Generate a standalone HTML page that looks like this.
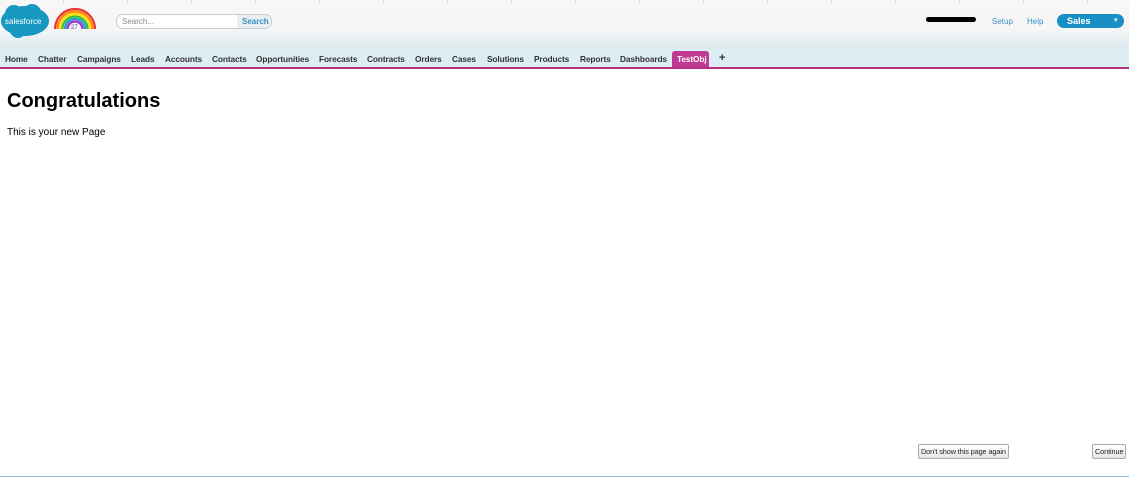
<!DOCTYPE html>
<html><head><style>
body{margin:0;width:1129px;height:481px;position:relative;overflow:hidden;background:#fff;font-family:"Liberation Sans",Arial,sans-serif}
.hdr{position:absolute;left:0;top:0;width:1129px;height:49px;background:linear-gradient(#f7f7f7 0,#f5f6f6 60%,#dbe9ee 100%)}
.tick{position:absolute;top:0;width:1px;height:4px;background:#ddd}
.nav{position:absolute;left:0;top:49px;width:1129px;height:18px;background:#dcedf3;border-bottom:2px solid #b5317f}
.t{position:absolute;top:54px;font-size:8.3px;font-weight:bold;color:#333;letter-spacing:-0.1px}
.a{position:absolute;font-size:8px;font-weight:bold;color:#3a8fc4}
.btn{position:absolute;font-size:7.3px;color:#222;border:1px solid #aaa;border-radius:2px;background:linear-gradient(#fff,#e6e6e6);padding:2px 2px;letter-spacing:-0.1px}
</style></head><body>
<div class="hdr"></div>
<div class="tick" style="left:63px"></div><div class="tick" style="left:127px"></div><div class="tick" style="left:191px"></div><div class="tick" style="left:255px"></div><div class="tick" style="left:319px"></div><div class="tick" style="left:383px"></div><div class="tick" style="left:447px"></div><div class="tick" style="left:511px"></div><div class="tick" style="left:575px"></div><div class="tick" style="left:639px"></div><div class="tick" style="left:703px"></div><div class="tick" style="left:767px"></div><div class="tick" style="left:831px"></div><div class="tick" style="left:895px"></div><div class="tick" style="left:959px"></div><div class="tick" style="left:1023px"></div><div class="tick" style="left:1087px"></div>
<svg style="position:absolute;left:0;top:3px" width="52" height="36"><ellipse cx="25" cy="18" rx="24" ry="15" fill="#1798c1"/><circle cx="14" cy="11" r="9" fill="#1798c1"/><circle cx="32" cy="10" r="9" fill="#1798c1"/><circle cx="18" cy="27" r="8" fill="#1798c1"/><text x="5" y="21" font-size="8" fill="#fff" font-family="Liberation Sans">salesforce</text></svg>
<svg style="position:absolute;left:53px;top:7px" width="44" height="24"><g fill="none" stroke-width="2.2"><path d="M2 22A20 20 0 0 1 42 22" stroke="#e33"/><path d="M4.5 22A17.5 17.5 0 0 1 39.5 22" stroke="#f80"/><path d="M7 22A15 15 0 0 1 37 22" stroke="#fd0"/><path d="M9.5 22A12.5 12.5 0 0 1 34.5 22" stroke="#3b3"/><path d="M12 22A10 10 0 0 1 32 22" stroke="#29d"/><path d="M14.5 22A7.5 7.5 0 0 1 29.5 22" stroke="#93c"/></g><text x="18" y="22" font-size="6" fill="#639">27</text></svg>
<div style="position:absolute;left:116px;top:14px;width:154px;height:13px;border:1px solid #ccc;border-radius:7px;background:#fff"></div>
<div style="position:absolute;left:122px;top:17px;font-size:8px;color:#888">Search...</div>
<div style="position:absolute;left:237px;top:15px;width:34px;height:13px;background:#e8eef1;border-radius:0 7px 7px 0"></div>
<div class="a" style="left:242px;top:17px">Search</div>
<div style="position:absolute;left:926px;top:17px;width:50px;height:5px;background:#000;border-radius:3px"></div>
<div class="a" style="left:992px;top:17px;font-weight:normal">Setup</div>
<div class="a" style="left:1027px;top:17px;font-weight:normal">Help</div>
<div style="position:absolute;left:1057px;top:14px;width:67px;height:14px;background:#1a8fc5;border-radius:7px"></div>
<div style="position:absolute;left:1067px;top:16px;font-size:9px;font-weight:bold;color:#fff">Sales</div>
<div style="position:absolute;left:1114px;top:16px;font-size:7px;color:#fff">▾</div>
<div class="nav"></div>
<div class="t" style="left:5px">Home</div><div class="t" style="left:38px">Chatter</div><div class="t" style="left:77px">Campaigns</div><div class="t" style="left:131px">Leads</div><div class="t" style="left:165px">Accounts</div><div class="t" style="left:212px">Contacts</div><div class="t" style="left:256px">Opportunities</div><div class="t" style="left:319px">Forecasts</div><div class="t" style="left:367px">Contracts</div><div class="t" style="left:415px">Orders</div><div class="t" style="left:452px">Cases</div><div class="t" style="left:487px">Solutions</div><div class="t" style="left:534px">Products</div><div class="t" style="left:580px">Reports</div><div class="t" style="left:620px">Dashboards</div>
<div style="position:absolute;left:672px;top:51px;width:37px;height:16px;background:#c03a93;border-radius:3px 3px 0 0"></div>
<div class="t" style="left:677px;color:#fff">TestObj</div>
<div class="t" style="left:719px;font-size:11px;top:52px">+</div>
<div style="position:absolute;left:7px;top:90px;font-size:20px;font-weight:bold;color:#000">Congratulations</div>
<div style="position:absolute;left:7px;top:127px;font-size:10px;color:#000">This is your new Page</div>
<div class="btn" style="left:918px;top:444px">Don't show this page again</div>
<div class="btn" style="left:1092px;top:444px">Continue</div>
<div style="position:absolute;left:0;top:476px;width:1129px;height:1px;background:#8fb7d6"></div>
</body></html>
